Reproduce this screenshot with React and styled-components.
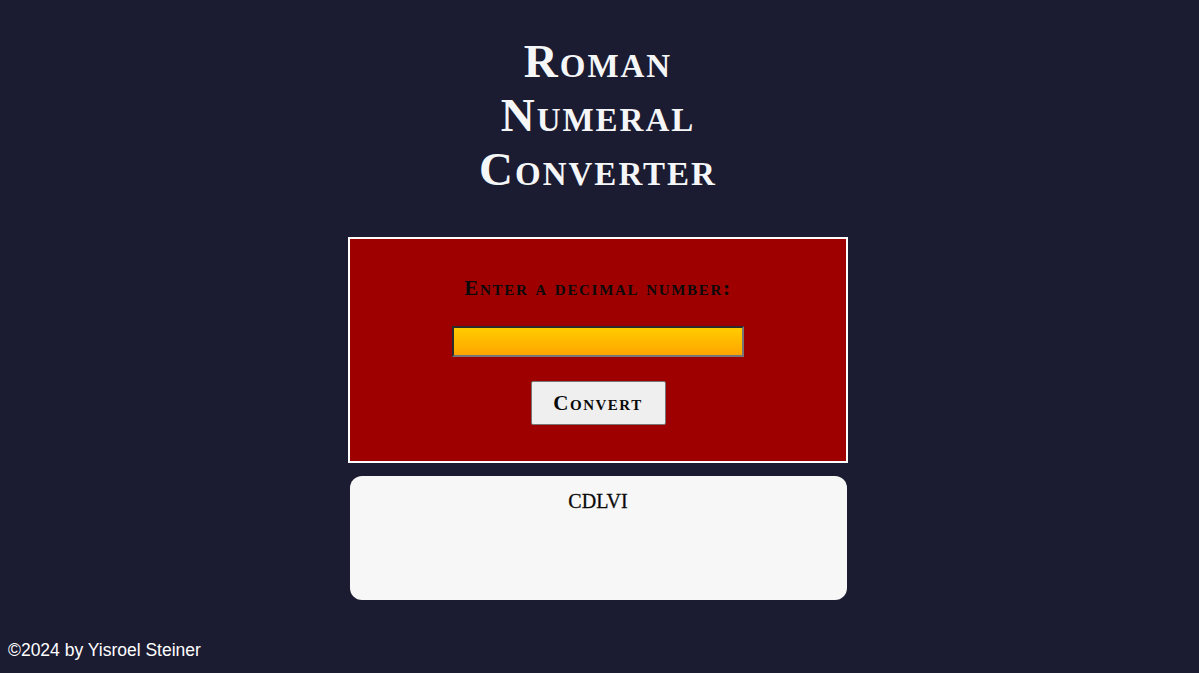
import React, { useState } from "react";
import styled, { createGlobalStyle } from "styled-components";

const GlobalStyle = createGlobalStyle`
  body {
    margin: 0;
    background-color: #1b1b32;
    color: #f5f6f7;
    font-family: "Liberation Serif", "DejaVu Serif", serif;
  }
`;

const Main = styled.main`
  display: flex;
  flex-direction: column;
  align-items: center;
  padding: 34px 3px 0 0;
`;

const Title = styled.h1`
  margin: 0;
  width: 300px;
  text-align: center;
  font-size: 47px;
  line-height: 54px;
  font-weight: 700;
  font-variant: small-caps;
  letter-spacing: 2px;
  color: #f5f6f7;
`;

const Form = styled.form`
  box-sizing: border-box;
  width: 500px;
  height: 226px;
  margin-top: 41px;
  padding-top: 37px;
  border: 2px solid #fff;
  background-color: #9e0000;
  display: flex;
  flex-direction: column;
  align-items: center;
`;

const Label = styled.label`
  font-size: 21px;
  line-height: 24px;
  font-weight: 700;
  font-variant: small-caps;
  letter-spacing: 1.7px;
  color: #0a0a0a;
`;

const Input = styled.input`
  box-sizing: border-box;
  width: 292px;
  height: 31px;
  margin-top: 26px;
  border: 2px solid;
  border-color: #2b2b2b #767676 #767676 #2b2b2b;
  background: linear-gradient(#ffcc00, #ffa500);
  font-size: 18px;
  outline: none;
`;

const Button = styled.button`
  box-sizing: border-box;
  width: 135px;
  height: 44px;
  margin-top: 24px;
  border: 1px solid #767676;
  border-radius: 2px;
  background-color: #efefef;
  color: #0a0a0a;
  font-family: "Liberation Serif", "DejaVu Serif", serif;
  font-size: 21px;
  font-weight: 700;
  font-variant: small-caps;
  letter-spacing: 1.5px;
  cursor: pointer;
`;

const Output = styled.div`
  box-sizing: border-box;
  width: 497px;
  height: 124px;
  margin-top: 13px;
  padding-top: 13px;
  border-radius: 12px;
  background-color: #f7f7f7;
  color: #0a0a0a;
  text-align: center;
  font-size: 20px;
  line-height: 24px;
  font-weight: 400;
  -webkit-text-stroke: 0.3px #0a0a0a;
`;

const Footer = styled.footer`
  padding: 38px 8px 0;
  font-family: "Liberation Sans", Arial, sans-serif;
  font-size: 17.5px;
  line-height: 24px;
  color: #fff;
`;

const toRoman = (n) => {
  const map = [
    [1000, "M"], [900, "CM"], [500, "D"], [400, "CD"], [100, "C"], [90, "XC"],
    [50, "L"], [40, "XL"], [10, "X"], [9, "IX"], [5, "V"], [4, "IV"], [1, "I"],
  ];
  let out = "";
  for (const [v, s] of map) {
    while (n >= v) {
      out += s;
      n -= v;
    }
  }
  return out;
};

const App = () => {
  const [value, setValue] = useState("");
  const [result, setResult] = useState("CDLVI");

  const handleSubmit = (e) => {
    e.preventDefault();
    const n = parseInt(value, 10);
    if (isNaN(n)) setResult("Please enter a valid number");
    else if (n < 1) setResult("Please enter a number greater than or equal to 1");
    else if (n > 3999) setResult("Please enter a number less than or equal to 3999");
    else setResult(toRoman(n));
  };

  return (
    <>
      <GlobalStyle />
      <Main>
        <Title>Roman Numeral Converter</Title>
        <Form onSubmit={handleSubmit}>
          <Label htmlFor="number">Enter a decimal number:</Label>
          <Input
            id="number"
            type="number"
            value={value}
            onChange={(e) => setValue(e.target.value)}
          />
          <Button type="submit">Convert</Button>
        </Form>
        <Output>{result}</Output>
      </Main>
      <Footer>©2024 by Yisroel Steiner</Footer>
    </>
  );
};

export default App;
